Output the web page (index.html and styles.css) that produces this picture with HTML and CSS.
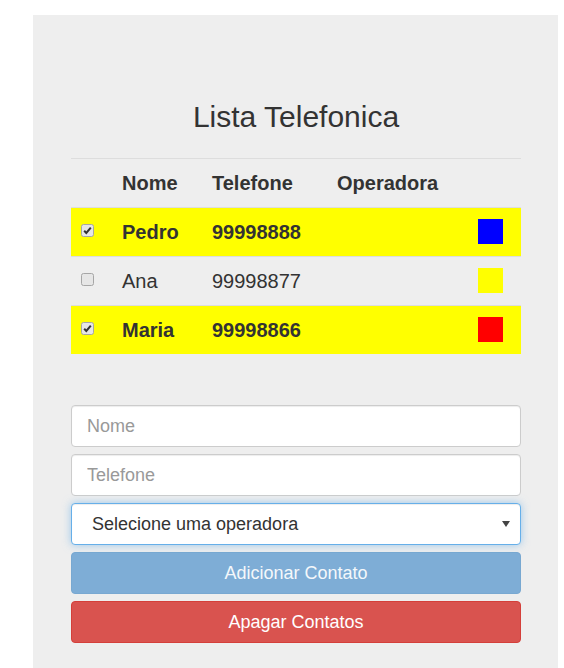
FILE: index.html
```html
<!DOCTYPE html>
<html lang="pt">
<head>
<meta charset="utf-8">
<title>Lista Telefonica</title>
<link rel="stylesheet" href="styles.css">
</head>
<body>
<div class="panel">
  <h2 class="title">Lista Telefonica</h2>
  <table class="contacts">
    <thead>
      <tr>
        <th class="col-check"></th>
        <th class="col-name">Nome</th>
        <th class="col-phone">Telefone</th>
        <th class="col-op">Operadora</th>
        <th class="col-color"></th>
      </tr>
    </thead>
    <tbody>
      <tr class="selected">
        <td class="col-check">
          <svg class="checkbox" width="13" height="13" viewBox="0 0 13 13"><rect x="0.5" y="0.5" width="12" height="12" rx="2" fill="#e6e6e6" stroke="#a6a6a6"/><path d="M3.2 6.8 L5.3 9 L9.8 3.6" fill="none" stroke="#333" stroke-width="2"/></svg>
        </td>
        <td>Pedro</td>
        <td>99998888</td>
        <td></td>
        <td class="col-color"><span class="swatch" style="background:#0000ff"></span></td>
      </tr>
      <tr>
        <td class="col-check">
          <svg class="checkbox" width="13" height="13" viewBox="0 0 13 13"><rect x="0.5" y="0.5" width="12" height="12" rx="2" fill="#e6e6e6" stroke="#a6a6a6"/></svg>
        </td>
        <td>Ana</td>
        <td>99998877</td>
        <td></td>
        <td class="col-color"><span class="swatch" style="background:#ffff00"></span></td>
      </tr>
      <tr class="selected">
        <td class="col-check">
          <svg class="checkbox" width="13" height="13" viewBox="0 0 13 13"><rect x="0.5" y="0.5" width="12" height="12" rx="2" fill="#e6e6e6" stroke="#a6a6a6"/><path d="M3.2 6.8 L5.3 9 L9.8 3.6" fill="none" stroke="#333" stroke-width="2"/></svg>
        </td>
        <td>Maria</td>
        <td>99998866</td>
        <td></td>
        <td class="col-color"><span class="swatch" style="background:#ff0000"></span></td>
      </tr>
    </tbody>
  </table>

  <form class="form">
    <input class="field" type="text" placeholder="Nome">
    <input class="field" type="text" placeholder="Telefone">
    <div class="select-wrap">
      <select class="field select">
        <option>Selecione uma operadora</option>
      </select>
      <svg class="select-arrow" width="8" height="6" viewBox="0 0 8 6"><path d="M0 0 H8 L4 6 Z" fill="#444"/></svg>
    </div>
    <button type="button" class="btn btn-primary" disabled>Adicionar Contato</button>
    <button type="button" class="btn btn-danger">Apagar Contatos</button>
  </form>
</div>
</body>
</html>
```

FILE: styles.css
```css
* { box-sizing: border-box; }

html, body {
  margin: 0;
  padding: 0;
  background: #ffffff;
}

body {
  font-family: "Liberation Sans", Arial, Helvetica, sans-serif;
  color: #333333;
}

.panel {
  margin: 15px 0 0 33px;
  width: 525px;
  background: #eeeeee;
  padding: 85px 37px 40px 38px;
}

.title {
  margin: 0 0 25px;
  font-size: 30px;
  line-height: 33px;
  font-weight: 400;
  text-align: center;
  color: #333333;
}

.contacts {
  width: 100%;
  border-collapse: collapse;
  font-size: 20px;
  table-layout: fixed;
}

.contacts tr {
  border-top: 1px solid #dddddd;
}

.contacts th,
.contacts td {
  padding: 8px;
  line-height: 32px;
  height: 48px;
  text-align: left;
  vertical-align: middle;
}

.contacts th {
  font-weight: 700;
}

.contacts tr.selected {
  background: #ffff00;
  font-weight: 700;
}

.col-check { width: 43px; }
.col-name { width: 90px; }
.col-phone { width: 125px; }
.col-op { width: 141px; }
.col-color { width: 51px; }

.contacts td.col-check {
  padding-left: 10px;
  padding-right: 0;
}

.checkbox {
  display: block;
  margin-top: -3px;
}

.swatch {
  display: block;
  width: 25px;
  height: 25px;
  margin-top: -2px;
}

.form {
  margin-top: 51px;
  display: flex;
  flex-direction: column;
  gap: 7px;
}

.field {
  display: block;
  width: 100%;
  height: 42px;
  border: 1px solid #cccccc;
  border-radius: 4px;
  background: #ffffff;
  padding: 0 15px;
  font-family: "Liberation Sans", Arial, Helvetica, sans-serif;
  font-size: 18px;
  color: #333333;
  box-shadow: inset 0 1px 1px rgba(0, 0, 0, 0.075);
  outline: none;
}

.field::placeholder {
  color: #999999;
}

.select-wrap {
  position: relative;
}

.select {
  appearance: none;
  -webkit-appearance: none;
  padding-left: 20px;
  border-color: #66afe9;
  box-shadow: inset 0 1px 1px rgba(0, 0, 0, 0.075), 0 0 8px rgba(102, 175, 233, 0.6);
}

.select-arrow {
  position: absolute;
  right: 11px;
  top: 18px;
}

.btn {
  display: block;
  width: 100%;
  height: 42px;
  border: 1px solid transparent;
  border-radius: 4px;
  font-family: "Liberation Sans", Arial, Helvetica, sans-serif;
  font-size: 18px;
  color: #ffffff;
  padding: 0 16px;
}

.btn-primary {
  background: #7eadd6;
  border-color: #78a8d1;
  color: #f4f8fb;
}

.btn-danger {
  background: #d9534f;
  border-color: #d43f3a;
}
```
